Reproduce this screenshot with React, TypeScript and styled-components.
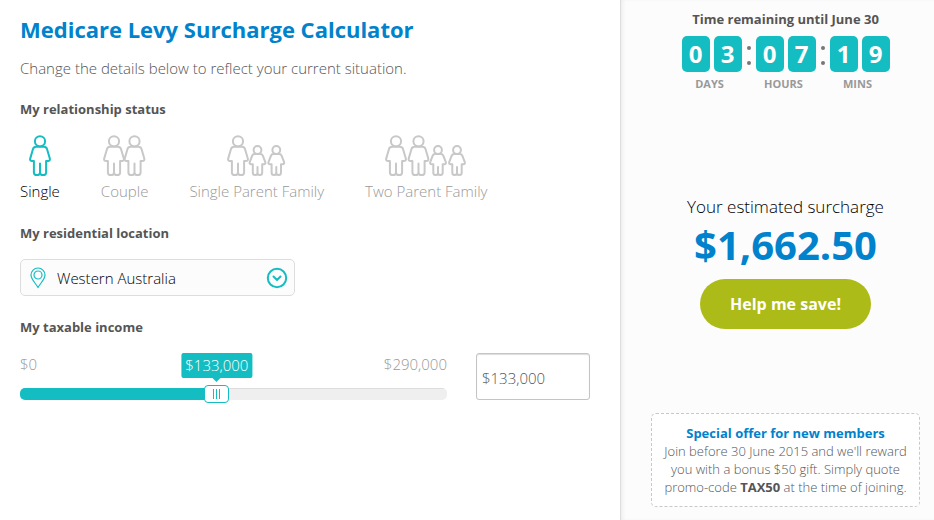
import React, { useState } from 'react';
import styled, { createGlobalStyle, css } from 'styled-components';

const teal = '#14bdc2';
const blue = '#0082cc';
const grey = '#999';
const text = '#555';

const GlobalStyle = createGlobalStyle`
  * { box-sizing: border-box; }
  body {
    margin: 0;
    background: #fff;
    color: ${text};
    font: 300 15px/20px "Open Sans", "Noto Sans", sans-serif;
  }
  button, input, select { font: inherit; color: inherit; }
`;

const Page = styled.div`
  display: grid;
  grid-template-columns: minmax(0, 1fr) 314px;
  min-height: 100vh;
`;

const Main = styled.main`
  padding: 15px 30px 24px 20px;
`;

const Title = styled.h1`
  margin: 0;
  color: ${blue};
  font-size: 22px;
  font-weight: 700;
  line-height: 28px;
`;

const Intro = styled.p`
  margin: 15px 0 21px;
`;

const Group = styled.fieldset`
  margin: 0;
  padding: 0;
  border: 0;
  min-width: 0;
`;

const sectionHeading = css`
  display: block;
  padding: 0;
  color: ${text};
  font-size: 13px;
  font-weight: 700;
  line-height: 20px;
`;

const Legend = styled.legend`
  ${sectionHeading}
`;

const FieldLabel = styled.label`
  ${sectionHeading}
`;

const Choices = styled.div`
  display: flex;
  gap: 41px;
  padding: 16px 0 22px;
`;

const HiddenRadio = styled.input`
  position: absolute;
  opacity: 0;
  width: 1px;
  height: 1px;
  margin: 0;
`;

const Choice = styled.label<{ $active: boolean }>`
  display: flex;
  flex-direction: column;
  align-items: center;
  gap: 5px;
  color: ${(p) => (p.$active ? '#000' : grey)};
  cursor: pointer;
  white-space: nowrap;

  svg { color: ${(p) => (p.$active ? teal : '#c8c8c8')}; }
  &:has(input:focus-visible) { outline: 1px dotted ${grey}; }
`;

const Drawing = styled.svg`
  display: block;
  fill: none;
  stroke: currentColor;
  stroke-width: 2;
  stroke-linejoin: round;
  stroke-linecap: round;
`;

const SelectBox = styled.div`
  display: grid;
  grid-template-columns: 34px 1fr 34px;
  align-items: center;
  justify-items: center;
  width: 275px;
  max-width: 100%;
  height: 37px;
  margin: 16px 0 21px;
  border: 1px solid #ddd;
  border-radius: 5px;
  background: #fcfcfc;
  color: ${teal};

  > * { grid-row: 1; }
  > svg { pointer-events: none; z-index: 1; }
  > svg:first-child { grid-column: 1; }
  > svg:last-child { grid-column: 3; }
`;

const Select = styled.select`
  grid-column: 1 / -1;
  width: 100%;
  height: 100%;
  padding: 0 36px;
  border: 0;
  background: transparent;
  color: #000;
  appearance: none;
  cursor: pointer;
`;

const IncomeRow = styled.div`
  display: grid;
  grid-template-columns: minmax(0, 427fr) minmax(80px, 114fr);
  gap: 29px;
  margin-top: 16px;
`;

const SliderArea = styled.div`
  position: relative;
`;

const Scale = styled.div`
  display: flex;
  justify-content: space-between;
  padding-top: 1px;
  color: ${grey};
`;

const Bubble = styled.output`
  position: absolute;
  top: 0;
  transform: translateX(-50%);
  padding: 0 4px;
  border-radius: 2px;
  background: ${teal};
  color: #fff;
  line-height: 25px;

  &::after {
    content: '';
    position: absolute;
    top: 100%;
    left: 50%;
    margin-left: -4px;
    border: 4px solid transparent;
    border-top-color: ${teal};
    border-bottom: 0;
  }
`;

const Range = styled.input`
  display: block;
  width: 100%;
  height: 18px;
  margin: 11px 0 0;
  background: transparent;
  appearance: none;
  cursor: pointer;

  &::-webkit-slider-runnable-track {
    height: 12px;
    border-radius: 5px;
    background:
      linear-gradient(${teal}, ${teal}) 0 0 / var(--fill) 100% no-repeat,
      linear-gradient(#ddd 1px, #efefef 1px);
  }

  &::-webkit-slider-thumb {
    appearance: none;
    width: 25px;
    height: 18px;
    margin-top: -3px;
    border: 1px solid ${teal};
    border-radius: 4px;
    background:
      linear-gradient(${teal}, ${teal}) 8px 3px / 1px 10px no-repeat,
      linear-gradient(${teal}, ${teal}) 11px 3px / 1px 10px no-repeat,
      linear-gradient(${teal}, ${teal}) 14px 3px / 1px 10px no-repeat,
      #fff;
  }
`;

const IncomeInput = styled.input`
  width: 100%;
  height: 47px;
  padding: 3px 5px 0;
  border: 1px solid #c4c4c4;
  border-radius: 3px;
  box-shadow: inset 0 1px 1px #ddd;
  background: #fff;
`;

const Aside = styled.aside`
  display: flex;
  flex-direction: column;
  justify-content: space-between;
  gap: 24px;
  padding: 9px 14px 13px 31px;
  background: #fcfcfc;
  box-shadow: inset 1px 0 0 #dedede, inset 4px 0 4px -2px #e8e8e8;
  text-align: center;
`;

const TimerTitle = styled.h2`
  margin: 0 0 7px;
  color: ${text};
  font-size: 13px;
  font-weight: 700;
  line-height: 20px;
`;

const Timer = styled.div`
  display: flex;
  justify-content: center;
`;

const Unit = styled.div`
  display: flex;
  flex-direction: column;
  align-items: center;
`;

const Digits = styled.div`
  display: flex;
  gap: 4px;
`;

const Digit = styled.span`
  width: 28px;
  border-radius: 5px;
  background: ${teal};
  color: #fff;
  font-size: 24px;
  font-weight: 700;
  line-height: 36px;
`;

const UnitLabel = styled.span`
  padding: 4px 4px 0 0;
  color: ${grey};
  font-size: 11px;
  font-weight: 700;
  line-height: 16px;
`;

const Colon = styled.div`
  display: flex;
  flex-direction: column;
  align-items: center;
  justify-content: center;
  gap: 11px;
  width: 14px;
  height: 38px;

  &::before, &::after {
    content: '';
    width: 4px;
    height: 4px;
    border-radius: 50%;
    background: #777;
  }
`;

const Estimate = styled.div`
  display: flex;
  flex-direction: column;
  align-items: center;
  padding-top: 19px;
`;

const EstimateLabel = styled.span`
  color: #000;
  font-size: 17px;
  line-height: 24px;
`;

const Amount = styled.strong`
  color: ${blue};
  font-size: 40px;
  font-weight: 700;
  line-height: 52px;
`;

const SaveButton = styled.button`
  height: 50px;
  margin-top: 8px;
  padding: 0 30px;
  border: 0;
  border-radius: 25px;
  background: #acbb17;
  color: #fff;
  font-size: 16px;
  font-weight: 700;
  cursor: pointer;
`;

const Offer = styled.section`
  padding: 10px 9px;
  border: 1px dashed #c8c8c8;
  border-radius: 5px;
  background: #fff;
  font-size: 13px;
  line-height: 18px;

  h3 {
    margin: 0;
    color: ${blue};
    font-size: 13px;
    font-weight: 700;
  }
  p { margin: 0; }
  strong { font-weight: 700; }
`;

const Adult = ({ x }: { x: number }) => (
  <g transform={`translate(${x} 0)`}>
    <circle cx="11" cy="6.3" r="5.1" />
    <path d="M7 11.800C5.200 11.800 4.500 12.600 4 14L1.200 23.600c-.4 1.400.5 2.400 1.800 2.400H4.900v11.400c0 1.600 1.200 2.600 3 2.600s3.100-1 3.100-2.600V28.500v8.900c0 1.600 1.300 2.600 3.100 2.600s3-1 3-2.600V26H19c1.300 0 2.200-1 1.800-2.400L18 14c-.5-1.400-1.200-2.200-3-2.200z" />
  </g>
);

const Child = ({ x }: { x: number }) => (
  <g transform={`translate(${x} 0)`}>
    <circle cx="9" cy="15" r="3.900" />
    <path d="M6.300 19C4.700 19 4 19.700 3.600 20.800L1.200 27.200c-.4 1.200.3 2 1.400 2H4.300v8.300c0 1.500.9 2.500 2.300 2.500S9 39.200 9 37.800V32v5.800c0 1.400 1 2.200 2.400 2.200s2.300-1 2.300-2.500v-8.300H15.400c1.100 0 1.800-.8 1.400-2L14.400 20.800C14 19.700 13.300 19 11.700 19z" />
  </g>
);

type Family = { id: string; label: string; width: number; adults: number[]; children: number[] };

const families: Family[] = [
  { id: 'single', label: 'Single', width: 22, adults: [0], children: [] },
  { id: 'couple', label: 'Couple', width: 43, adults: [0, 20.5], children: [] },
  { id: 'single-parent', label: 'Single Parent Family', width: 59, adults: [0], children: [21.5, 40.3] },
  { id: 'two-parent', label: 'Two Parent Family', width: 82, adults: [0, 22.5], children: [44, 63] },
];

const countdown = [
  { label: 'DAYS', value: '03' },
  { label: 'HOURS', value: '07' },
  { label: 'MINS', value: '19' },
];

const states = [
  'Western Australia',
  'New South Wales',
  'Victoria',
  'Queensland',
  'South Australia',
  'Tasmania',
];

const MAX_INCOME = 290000;
const THUMB = 25;
const money = (n: number) => `$${n.toLocaleString('en-AU')}`;

export default function App() {
  const [status, setStatus] = useState('single');
  const [income, setIncome] = useState(133000);
  const share = income / MAX_INCOME;
  const thumbCentre = `calc(${THUMB / 2}px + (100% - ${THUMB}px) * ${share})`;

  return (
    <>
      <GlobalStyle />
      <Page>
        <Main>
          <Title>Medicare Levy Surcharge Calculator</Title>
          <Intro>Change the details below to reflect your current situation.</Intro>

          <Group>
            <Legend>My relationship status</Legend>
            <Choices>
              {families.map((f) => (
                <Choice key={f.id} $active={status === f.id}>
                  <HiddenRadio
                    type="radio"
                    name="status"
                    checked={status === f.id}
                    onChange={() => setStatus(f.id)}
                  />
                  <Drawing width={f.width} height="41" viewBox={`0 0 ${f.width} 41`} aria-hidden="true">
                    {f.adults.map((x) => <Adult key={x} x={x} />)}
                    {f.children.map((x) => <Child key={x} x={x} />)}
                  </Drawing>
                  {f.label}
                </Choice>
              ))}
            </Choices>
          </Group>

          <FieldLabel htmlFor="location">My residential location</FieldLabel>
          <SelectBox>
            <Drawing width="16" height="22" viewBox="0 0 16 22" aria-hidden="true">
              <g strokeWidth="1.2">
                <path d="M8 20.6C6 16.6 1 12.4 1 8a7 7 0 0 1 14 0c0 4.400-5 8.600-7 12.600z" />
                <circle cx="8" cy="8" r="4" />
              </g>
            </Drawing>
            <Select id="location" defaultValue={states[0]}>
              {states.map((s) => <option key={s}>{s}</option>)}
            </Select>
            <Drawing width="22" height="22" viewBox="0 0 22 22" aria-hidden="true">
              <circle cx="11" cy="11" r="9.2" />
              <path d="M7.500 9.500l3.500 3.500 3.500-3.500" />
            </Drawing>
          </SelectBox>

          <FieldLabel htmlFor="income-range">My taxable income</FieldLabel>
          <IncomeRow>
            <SliderArea>
              <Scale>
                <span>$0</span>
                <span>{money(MAX_INCOME)}</span>
              </Scale>
              <Bubble htmlFor="income-range" style={{ left: thumbCentre }}>{money(income)}</Bubble>
              <Range
                id="income-range"
                type="range"
                min={0}
                max={MAX_INCOME}
                step={1000}
                value={income}
                onChange={(e) => setIncome(Number(e.target.value))}
                style={{ '--fill': thumbCentre } as React.CSSProperties}
              />
            </SliderArea>
            <IncomeInput
              type="text"
              aria-label="Taxable income"
              value={money(income)}
              onChange={(e) =>
                setIncome(Math.min(MAX_INCOME, Number(e.target.value.replace(/\D/g, ''))))
              }
            />
          </IncomeRow>
        </Main>

        <Aside>
          <div>
            <TimerTitle>Time remaining until June 30</TimerTitle>
            <Timer>
              {countdown.map((u, i) => (
                <React.Fragment key={u.label}>
                  {i > 0 && <Colon />}
                  <Unit>
                    <Digits>
                      {u.value.split('').map((d, k) => <Digit key={k}>{d}</Digit>)}
                    </Digits>
                    <UnitLabel>{u.label}</UnitLabel>
                  </Unit>
                </React.Fragment>
              ))}
            </Timer>
          </div>

          <Estimate>
            <EstimateLabel>Your estimated surcharge</EstimateLabel>
            <Amount>$1,662.50</Amount>
            <SaveButton type="button">Help me save!</SaveButton>
          </Estimate>

          <Offer>
            <h3>Special offer for new members</h3>
            <p>
              Join before 30 June 2015 and we'll reward you with a bonus $50 gift. Simply quote
              promo-code <strong>TAX50</strong> at the time of joining.
            </p>
          </Offer>
        </Aside>
      </Page>
    </>
  );
}
